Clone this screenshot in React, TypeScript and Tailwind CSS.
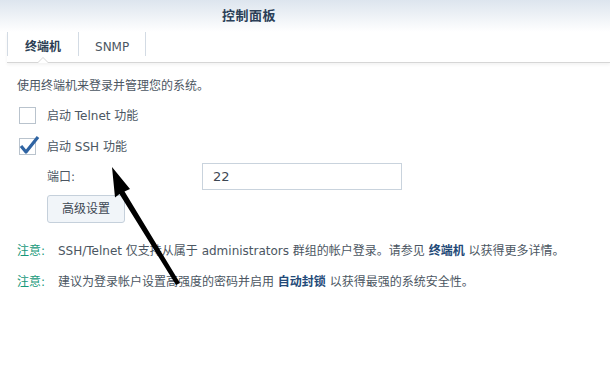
import React from 'react'

const font = { fontFamily: '"DejaVu Sans", "Noto Sans CJK SC", sans-serif' }

function Checkbox({ checked, label }: { checked?: boolean; label: string }) {
  return (
    <div className="flex items-center h-[17px]">
      <div className="relative w-[17px] h-[17px] border border-[#b9c3cd] bg-white shrink-0">
        {checked && (
          <svg className="absolute -left-[2px] -top-[5px]" width="22" height="22" viewBox="0 0 22 22">
            <path d="M3 12 L8 18 L20 3" fill="none" stroke="#2f64a3" strokeWidth="3.2" strokeLinejoin="round" />
          </svg>
        )}
      </div>
      <span className="ml-[11px] text-[12px] text-[#4b5662]">{label}</span>
    </div>
  )
}

export default function App() {
  return (
    <div className="relative w-[610px] h-[384px] bg-white overflow-hidden" style={font}>
      <div className="h-[32px] bg-gradient-to-b from-[#dde5ee] to-white flex items-center pl-[222px]">
        <span className="text-[13px] font-bold text-[#2b3f58] tracking-[0.5px]">控制面板</span>
      </div>

      <div className="relative ml-[7px] h-[31px] flex items-end border-b border-[#d6d6d6] shadow-[0_2px_3px_rgba(0,0,0,0.05)]">
        <div className="h-[24px] self-start border-l border-[#d3dbe4]" />
        <div className="relative h-full flex items-center px-[17px] text-[12px] font-bold text-[#2c3f55]">
          终端机
          <div className="absolute left-[29px] -bottom-[1px] w-0 h-0 border-l-[6px] border-r-[6px] border-b-[6px] border-l-transparent border-r-transparent border-b-[#d6d6d6]" />
          <div className="absolute left-[30px] -bottom-[1px] w-0 h-0 border-l-[5px] border-r-[5px] border-b-[5px] border-l-transparent border-r-transparent border-b-white" />
        </div>
        <div className="h-[24px] self-start border-l border-[#d3dbe4]" />
        <div className="h-full flex items-center px-[16px] text-[12px] text-[#4b5662]">SNMP</div>
        <div className="h-[24px] self-start border-l border-[#d3dbe4]" />
      </div>

      <div className="pl-[17px] pt-[14px] text-[12px] text-[#4b5662]">
        <div className="h-[17px] flex items-center">使用终端机来登录并管理您的系统。</div>

        <div className="mt-[13px] pl-[2px] flex flex-col gap-[14px]">
          <Checkbox label="启动 Telnet 功能" />
          <Checkbox checked label="启动 SSH 功能" />
        </div>

        <div className="mt-[8px] pl-[30px] flex items-center">
          <span className="w-[155px]">端口:</span>
          <div className="w-[200px] h-[27px] border border-[#c9d3dd] flex items-center pl-[10px] text-[13px] text-[#3d4753]">22</div>
        </div>

        <div className="mt-[5px] pl-[30px]">
          <div className="w-[78px] h-[28px] rounded-[3px] border border-[#c5d0db] bg-[#f1f5f9] flex items-center justify-center text-[12px] text-[#3d4753]">
            高级设置
          </div>
        </div>

        <div className="mt-[19px] h-[17px] flex items-center">
          <span className="text-[#17987a] w-[41px]">注意:</span>
          <span>
            SSH/Telnet 仅支持从属于 administrators 群组的帐户登录。请参见 <span className="font-bold text-[#234a78]">终端机</span> 以获得更多详情。
          </span>
        </div>
        <div className="mt-[14px] h-[17px] flex items-center">
          <span className="text-[#17987a] w-[41px]">注意:</span>
          <span>
            建议为登录帐户设置高强度的密码并启用 <span className="font-bold text-[#234a78]">自动封锁</span> 以获得最强的系统安全性。
          </span>
        </div>
      </div>

      <svg className="absolute left-0 top-0 pointer-events-none" width="610" height="384">
        <path d="M112 167 L130 189 L124.5 191.5 L180 283 L176 285 L119.5 194 L115 197.5 Z" fill="#000" />
      </svg>
    </div>
  )
}
